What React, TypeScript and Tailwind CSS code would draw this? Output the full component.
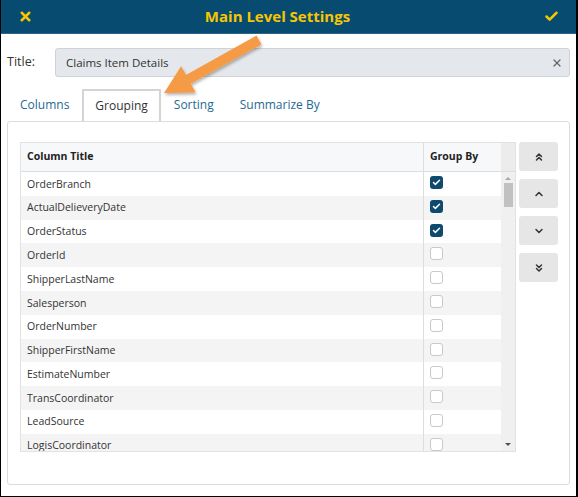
import { Check, X, ChevronsUp, ChevronUp, ChevronDown, ChevronsDown } from "lucide-react";

const ROWS = [
  { name: "OrderBranch", grouped: true },
  { name: "ActualDelieveryDate", grouped: true },
  { name: "OrderStatus", grouped: true },
  { name: "OrderId", grouped: false },
  { name: "ShipperLastName", grouped: false },
  { name: "Salesperson", grouped: false },
  { name: "OrderNumber", grouped: false },
  { name: "ShipperFirstName", grouped: false },
  { name: "EstimateNumber", grouped: false },
  { name: "TransCoordinator", grouped: false },
  { name: "LeadSource", grouped: false },
  { name: "LogisCoordinator", grouped: false },
];

const TABS = ["Columns", "Grouping", "Sorting", "Summarize By"];

function GroupCheckbox({ checked }: { checked: boolean }) {
  if (checked) {
    return (
      <span className="flex h-[13px] w-[13px] items-center justify-center rounded-[3px] bg-[#0d4a6e]">
        <Check size={9} strokeWidth={4} className="text-white" />
      </span>
    );
  }
  return <span className="block h-[13px] w-[13px] rounded-[3px] border border-[#c9c9c9] bg-white" />;
}

function MoveButton({ children }: { children: React.ReactNode }) {
  return (
    <button className="flex h-[29px] w-[39px] items-center justify-center rounded-[3px] bg-[#e6e6e6] text-[#333]">
      {children}
    </button>
  );
}

export default function App() {
  return (
    <div
      className="relative flex h-[497px] w-[578px] flex-col overflow-hidden border-b border-l border-r-2 border-black bg-white text-[#333]"
      style={{ fontFamily: "'Open Sans', 'Noto Sans', sans-serif" }}
    >
      <div className="flex h-[34px] shrink-0 items-center border-b border-[#2f6688] bg-[#074b70] px-[17px]">
        <X size={15} strokeWidth={4} className="text-[#f7c600]" />
        <span className="flex-1 pr-[22px] text-center text-[15px] font-bold text-[#f7c600]">Main Level Settings</span>
        <Check size={15} strokeWidth={4} className="text-[#f7c600]" />
      </div>

      <div className="mt-[14px] flex h-[29px] items-center pl-[6px] pr-[6px]">
        <span className="w-[48px] text-[12.5px]">Title:</span>
        <div className="flex h-full flex-1 items-center justify-between rounded-[3px] border border-[#cfd3d8] bg-[#e4e7eb] pl-[10px] pr-[6px]">
          <span className="text-[11.5px] text-[#333]">Claims Item Details</span>
          <X size={12} strokeWidth={2.5} className="text-[#666]" />
        </div>
      </div>

      <div className="mt-[12px] flex h-[32px] items-stretch pl-[6px]">
        {TABS.map((tab) =>
          tab === "Grouping" ? (
            <div
              key={tab}
              className="flex items-center border-2 border-b-0 border-[#d4d4d4] px-[11px] text-[12px] text-[#333]"
            >
              {tab}
            </div>
          ) : (
            <div key={tab} className="flex items-center px-[13px] text-[12px] text-[#1f6a93]">
              {tab}
            </div>
          )
        )}
      </div>

      <div className="mx-[6px] flex h-[364px] gap-[3px] rounded-[3px] border border-[#dcdcdc] pl-[12px] pt-[20px]">
        <div className="flex h-[310px] w-[496px] flex-col border border-[#e2e2e2]">
          <div className="flex h-[29px] shrink-0 border-b border-[#dddddd] bg-[#f7f8fa] text-[10.5px] font-bold text-[#222]">
            <div className="flex flex-1 items-center pl-[6px]">Column Title</div>
            <div className="flex w-[78px] items-center border-l border-[#dddddd] pl-[6px]">Group By</div>
            <div className="w-[14px] bg-[#ececec]" />
          </div>
          <div className="flex min-h-0 flex-1">
            <div className="flex-1 overflow-hidden">
              {ROWS.map((row, i) => (
                <div
                  key={row.name}
                  className={`flex h-[23.8px] shrink-0 text-[10.5px] text-[#333] ${i % 2 === 1 ? "bg-[#f4f4f4]" : "bg-white"}`}
                >
                  <div className="flex flex-1 items-center pl-[6px] pt-[1px]">{row.name}</div>
                  <div className="flex w-[78px] items-start border-l border-[#dddddd] pl-[6px] pt-[4px]">
                    <GroupCheckbox checked={row.grouped} />
                  </div>
                </div>
              ))}
            </div>
            <div className="flex w-[14px] flex-col items-center bg-[#f0f0f0]">
              <span className="mt-[5px] h-0 w-0 border-x-[3px] border-b-[3px] border-x-transparent border-b-[#a8a8a8]" />
              <span className="mt-[3px] h-[24px] w-[9px] bg-[#c1c1c1]" />
              <span className="flex-1" />
              <span className="mb-[5px] h-0 w-0 border-x-[3px] border-t-[3px] border-x-transparent border-t-[#505050]" />
            </div>
          </div>
        </div>

        <div className="flex flex-col gap-[8px]">
          <MoveButton>
            <ChevronsUp size={12} strokeWidth={3} />
          </MoveButton>
          <MoveButton>
            <ChevronUp size={12} strokeWidth={3} />
          </MoveButton>
          <MoveButton>
            <ChevronDown size={12} strokeWidth={3} />
          </MoveButton>
          <MoveButton>
            <ChevronsDown size={12} strokeWidth={3} />
          </MoveButton>
        </div>
      </div>

      {/* callout arrow pointing at the Grouping tab */}
      <svg className="pointer-events-none absolute left-0 top-0" width="578" height="497">
        <defs>
          <filter id="arrowShadow" x="-20%" y="-20%" width="140%" height="140%">
            <feDropShadow dx="1" dy="2" stdDeviation="1.5" floodColor="#000" floodOpacity="0.3" />
          </filter>
        </defs>
        <polygon
          points="255.6,35.6 260.4,44.4 189.8,83.8 194.7,92.5 163,93 180.1,66.3 185,75"
          fill="#f59a45"
          filter="url(#arrowShadow)"
        />
      </svg>
    </div>
  );
}
